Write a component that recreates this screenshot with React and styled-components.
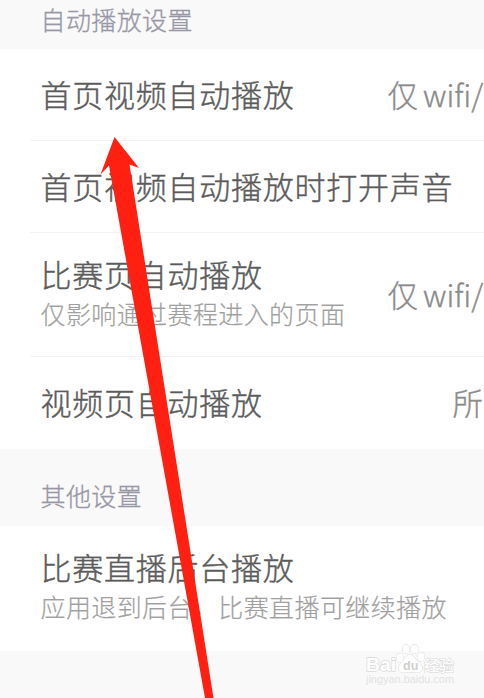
import styled, { createGlobalStyle } from 'styled-components'

/**
 * Components
 *
 * - Screen
 * - SectionHeader
 * - Row
 * - Watermark
 * - Arrow
 */

const GlobalStyle = createGlobalStyle`
  body {
    margin: 0;
    background: #f9f9f9;
    overflow: hidden;
    font-family: 'Noto Sans CJK SC', 'Noto Sans', sans-serif;
  }
`

const Screen = styled.main`
  position: relative;
  width: 484px;
  height: 698px;
  overflow: hidden;
  background: #f9f9f9;
`

const SectionHeader = styled.h2`
  box-sizing: border-box;
  height: ${props => props.height};
  margin: 0;
  padding: ${props => props.top} 0 0 40.5px;
  color: #9897a5;
  font-size: 25px;
  font-weight: 300;
  letter-spacing: 0.4px;
  line-height: 30px;
  white-space: nowrap;
  -webkit-text-stroke: 0.3px;
`

const RowElement = styled.div`
  box-sizing: border-box;
  display: flex;
  align-items: center;
  height: ${props => props.height};
  padding: 0 0 2px 40.5px;
  background: linear-gradient(#f3f3f3, #f3f3f3) 30px 100% / 100% ${props => (props.divider ? '1px' : '0')} no-repeat white;
  overflow: hidden;
`

const Labels = styled.div`
  flex: none;
  width: ${props => props.width};
  padding-bottom: ${props => props.lift};
`

const Title = styled.div`
  color: #5b5b5b;
  font-size: 31px;
  font-weight: 300;
  letter-spacing: 0.75px;
  line-height: 44px;
  white-space: nowrap;
  -webkit-text-stroke: 0.4px;
`

const Subtitle = styled.div`
  color: #a0a0a0;
  font-size: 25px;
  font-weight: 300;
  letter-spacing: 0.4px;
  line-height: 34px;
  white-space: nowrap;
  -webkit-text-stroke: 0.2px;
`

const Value = styled.div`
  flex: none;
  display: flex;
  gap: 5px;
  color: #8b8b8b;
  font-size: 30.5px;
  font-weight: 300;
  line-height: 44px;
  white-space: nowrap;
  -webkit-text-stroke: 0.35px;
`

const WatermarkElement = styled.svg`
  position: absolute;
  left: 360px;
  top: 640px;
`

const ArrowElement = styled.svg`
  position: absolute;
  left: 0;
  top: 0;
`

const Row = ({ height, title, subtitle, value, note, offset = '347px', lift = '0', divider }) => (
  <RowElement height={height} divider={divider}>
    <Labels width={offset} lift={lift}>
      <Title>{title}</Title>
      {subtitle && <Subtitle>{subtitle}</Subtitle>}
    </Labels>
    {value && (
      <Value>
        <span>{value}</span>
        {note && <span>{note}</span>}
      </Value>
    )}
  </RowElement>
)

const Watermark = () => (
  <WatermarkElement width="104" height="50" fill="white" stroke="#d9d9d9" strokeWidth="1" paintOrder="stroke">
    <text x="6" y="31" fontSize="19" strokeWidth="1.4" fontFamily="Liberation Sans, sans-serif" fontWeight="700" textLength="30" lengthAdjust="spacingAndGlyphs">
      Bai
    </text>
    <ellipse cx="40" cy="18" rx="3.5" ry="4.5" transform="rotate(-15 40 18)" />
    <ellipse cx="46" cy="9" rx="3.5" ry="4.5" />
    <ellipse cx="54.5" cy="9" rx="3.5" ry="4.5" />
    <ellipse cx="61" cy="17" rx="3.5" ry="4.5" transform="rotate(15 61 17)" />
    <path d="M50 15c-4 0-5 4-8 7s-4 5-3 8c2 4 7 2 11 2s10 2 12-2c1-3-1-5-4-8s-4-7-8-7z" />
    <text x="43" y="29.5" fontSize="12.5" stroke="none" fill="#cfcfcf" fontFamily="Liberation Sans, sans-serif" fontWeight="700">du</text>
    <text x="64" y="31" fontSize="15" strokeWidth="1.2" fontFamily="Noto Sans CJK SC, sans-serif" fontWeight="500">经验</text>
    <text x="6" y="43" fontSize="10" fontFamily="Liberation Sans, sans-serif" textLength="88" lengthAdjust="spacingAndGlyphs" stroke="none" fill="#e2e2e2">
      jingyan.baidu.com
    </text>
  </WatermarkElement>
)

const Arrow = () => (
  <ArrowElement width="484" height="698" fill="#ff2012">
    <path d="M114.5 137L139 168L129.5 164.5L213.5 698H205L109 165.5L100.5 174.5Z" />
  </ArrowElement>
)

const App = () => (
  <>
    <GlobalStyle />
    <Screen>
      <SectionHeader height="49px" top="4px">自动播放设置</SectionHeader>
      <Row height="92px" title="首页视频自动播放" value="仅" note="wifi/" divider />
      <Row height="92px" title="首页视频自动播放时打开声音" divider />
      <Row height="124px" title="比赛页自动播放" subtitle="仅影响通过赛程进入的页面" value="仅" note="wifi/" lift="7px" divider />
      <Row height="92px" title="视频页自动播放" value="所" offset="412px" />
      <SectionHeader height="77px" top="31px">其他设置</SectionHeader>
      <Row height="125px" title="比赛直播后台播放" subtitle="应用退到后台，比赛直播可继续播放" lift="8px" />
      <Watermark />
      <Arrow />
    </Screen>
  </>
)

export default App
